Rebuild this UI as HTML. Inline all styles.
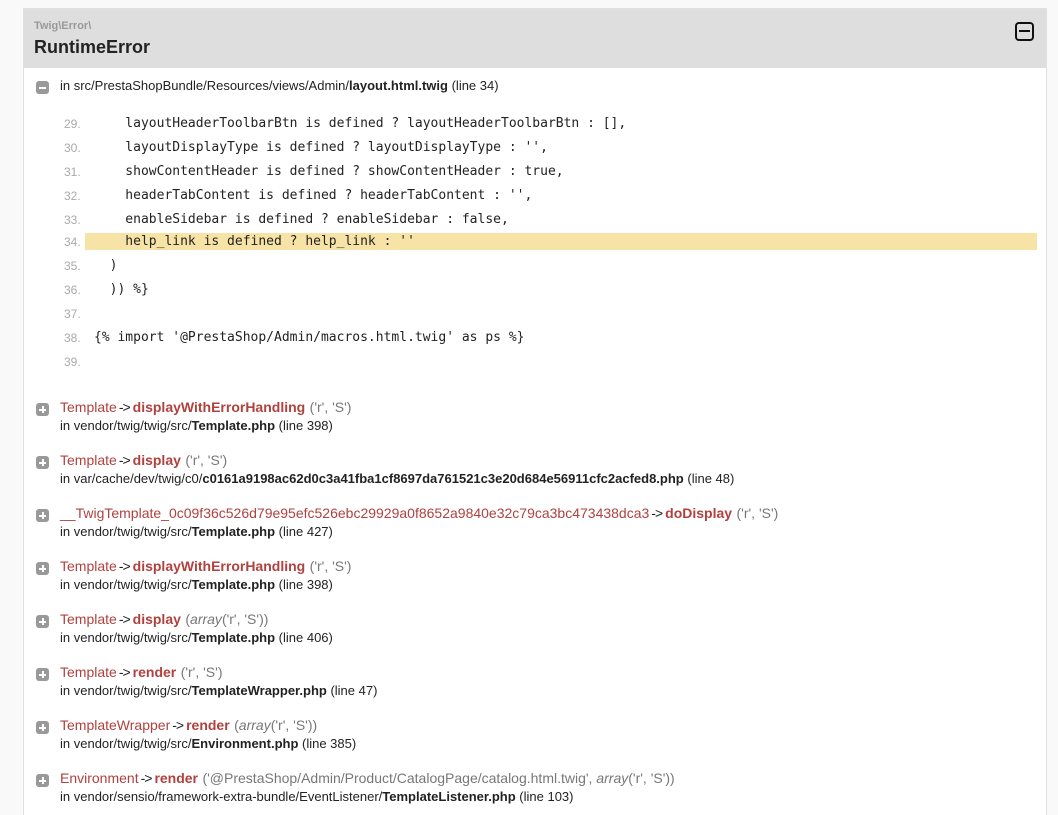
<!DOCTYPE html>
<html style="overflow:hidden;height:815px"><head><meta charset="utf-8"><style>
body{margin:0;background:#f9f9f9;font-family:"Liberation Sans",Arial,sans-serif;color:#222;width:1058px;height:815px;overflow:hidden;position:relative}
.box{position:absolute;left:23px;top:8px;width:1022px;height:815px;background:#fff;border:1px solid #e0e0e0;border-bottom:none}
.hd{position:absolute;left:0;top:0;width:1022px;height:59px;background:#dedede}
.ns{position:absolute;left:10px;top:11px;font-size:11px;font-weight:bold;color:#999}
.ttl{position:absolute;left:10px;top:28px;font-size:18px;font-weight:bold;color:#222}
.tog{position:absolute;left:991px;top:13px;width:15px;height:15px;border:2px solid #111;border-radius:4px}
.tog:after{content:"";position:absolute;left:2px;right:2px;top:6px;height:2px;background:#111}
.t{position:absolute;white-space:nowrap}
.ic{position:absolute;left:12px;width:13px;height:13px;background:#999;border-radius:3px}
.ic:before{content:"";position:absolute;left:3px;right:3px;top:5.5px;height:2px;background:#fff}
.ic.p:after{content:"";position:absolute;top:3px;bottom:3px;left:5.5px;width:2px;background:#fff}
.f{font-size:13px;color:#222}
.ln{position:absolute;left:40px;font-size:12px;color:#aaa;width:30px}
.cd{position:absolute;left:70px;font-family:"DejaVu Sans Mono","Liberation Mono",monospace;font-size:13px;white-space:pre;color:#222}
.hl{position:absolute;left:61px;top:224px;width:952px;height:17px;background:#f7e3a5}
.cl{color:#b0413e;font-size:14px}
.ar{font-size:14px;margin:0 3px 0 2px;letter-spacing:-1px}
.m{color:#b0413e;font-weight:bold;font-size:14px}
.a{color:#777;font-size:14px}
</style></head><body>
<div class="box">
<div class="hd"><div class="ns">Twig\Error\</div><div class="ttl">RuntimeError</div><div class="tog"></div></div>
<div class="ic" style="top:72px"></div>
<div class="t f" style="left:36px;top:69px">in src/PrestaShopBundle/Resources/views/Admin/<b>layout.html.twig</b> (line 34)</div>
<div class="hl"></div>
<div class="ln" style="top:108px">29.</div><div class="cd" style="top:107px">    layoutHeaderToolbarBtn is defined ? layoutHeaderToolbarBtn : [],</div>
<div class="ln" style="top:132px">30.</div><div class="cd" style="top:131px">    layoutDisplayType is defined ? layoutDisplayType : '',</div>
<div class="ln" style="top:156px">31.</div><div class="cd" style="top:155px">    showContentHeader is defined ? showContentHeader : true,</div>
<div class="ln" style="top:180px">32.</div><div class="cd" style="top:179px">    headerTabContent is defined ? headerTabContent : '',</div>
<div class="ln" style="top:204px">33.</div><div class="cd" style="top:203px">    enableSidebar is defined ? enableSidebar : false,</div>
<div class="ln" style="top:226px">34.</div><div class="cd" style="top:225px">    help_link is defined ? help_link : ''</div>
<div class="ln" style="top:250px">35.</div><div class="cd" style="top:249px">  )</div>
<div class="ln" style="top:274px">36.</div><div class="cd" style="top:273px">  )) %}</div>
<div class="ln" style="top:298px">37.</div>
<div class="ln" style="top:322px">38.</div><div class="cd" style="top:321px">{% import '@PrestaShop/Admin/macros.html.twig' as ps %}</div>
<div class="ln" style="top:346px">39.</div>

<div class="ic p" style="top:394px"></div>
<div class="t" style="left:36px;top:390px"><span class="cl">Template</span><span class="ar">-&gt;</span><span class="m">displayWithErrorHandling</span> <span class="a">('r', 'S')</span></div>
<div class="t f" style="left:36px;top:409px">in vendor/twig/twig/src/<b>Template.php</b> (line 398)</div>

<div class="ic p" style="top:447px"></div>
<div class="t" style="left:36px;top:443px"><span class="cl">Template</span><span class="ar">-&gt;</span><span class="m">display</span> <span class="a">('r', 'S')</span></div>
<div class="t f" style="left:36px;top:462px">in var/cache/dev/twig/c0/<b>c0161a9198ac62d0c3a41fba1cf8697da761521c3e20d684e56911cfc2acfed8.php</b> (line 48)</div>

<div class="ic p" style="top:500px"></div>
<div class="t" style="left:36px;top:496px"><span class="cl">__TwigTemplate_0c09f36c526d79e95efc526ebc29929a0f8652a9840e32c79ca3bc473438dca3</span><span class="ar">-&gt;</span><span class="m">doDisplay</span> <span class="a">('r', 'S')</span></div>
<div class="t f" style="left:36px;top:515px">in vendor/twig/twig/src/<b>Template.php</b> (line 427)</div>

<div class="ic p" style="top:553px"></div>
<div class="t" style="left:36px;top:549px"><span class="cl">Template</span><span class="ar">-&gt;</span><span class="m">displayWithErrorHandling</span> <span class="a">('r', 'S')</span></div>
<div class="t f" style="left:36px;top:568px">in vendor/twig/twig/src/<b>Template.php</b> (line 398)</div>

<div class="ic p" style="top:606px"></div>
<div class="t" style="left:36px;top:602px"><span class="cl">Template</span><span class="ar">-&gt;</span><span class="m">display</span> <span class="a">(<i>array</i>('r', 'S'))</span></div>
<div class="t f" style="left:36px;top:621px">in vendor/twig/twig/src/<b>Template.php</b> (line 406)</div>

<div class="ic p" style="top:659px"></div>
<div class="t" style="left:36px;top:655px"><span class="cl">Template</span><span class="ar">-&gt;</span><span class="m">render</span> <span class="a">('r', 'S')</span></div>
<div class="t f" style="left:36px;top:674px">in vendor/twig/twig/src/<b>TemplateWrapper.php</b> (line 47)</div>

<div class="ic p" style="top:712px"></div>
<div class="t" style="left:36px;top:708px"><span class="cl">TemplateWrapper</span><span class="ar">-&gt;</span><span class="m">render</span> <span class="a">(<i>array</i>('r', 'S'))</span></div>
<div class="t f" style="left:36px;top:727px">in vendor/twig/twig/src/<b>Environment.php</b> (line 385)</div>

<div class="ic p" style="top:765px"></div>
<div class="t" style="left:36px;top:761px"><span class="cl">Environment</span><span class="ar">-&gt;</span><span class="m">render</span> <span class="a">('@PrestaShop/Admin/Product/CatalogPage/catalog.html.twig', <i>array</i>('r', 'S'))</span></div>
<div class="t f" style="left:36px;top:780px">in vendor/sensio/framework-extra-bundle/EventListener/<b>TemplateListener.php</b> (line 103)</div>
</div>
</body></html>
